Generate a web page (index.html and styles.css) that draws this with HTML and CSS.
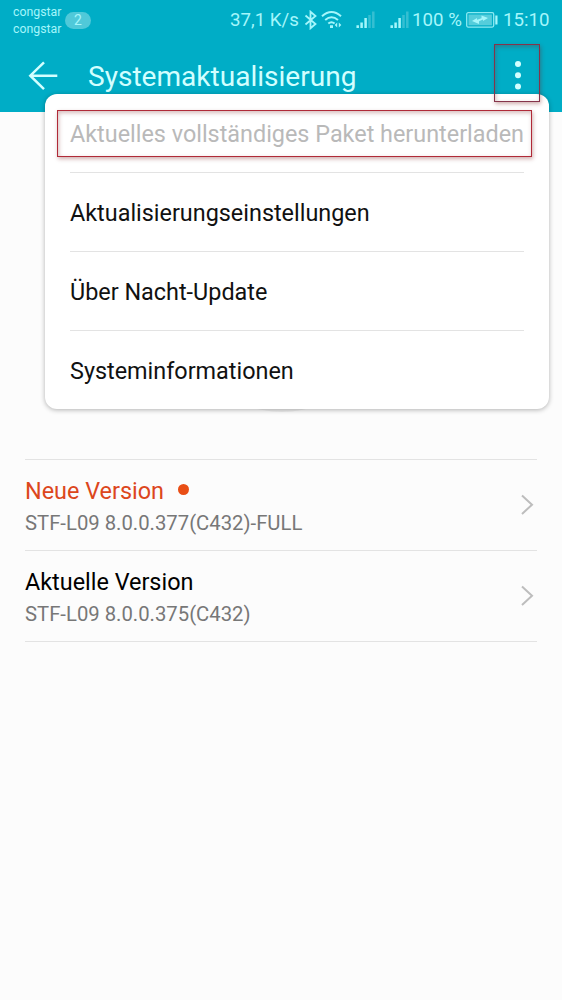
FILE: index.html
```html
<!DOCTYPE html>
<html lang="de">
<head>
<meta charset="utf-8">
<title>Systemaktualisierung</title>
<link rel="stylesheet" href="styles.css">
</head>
<body>
<div class="phone">
  <header class="top">
    <div class="status">
      <div class="carriers"><span>congstar</span><span>congstar</span></div>
      <span class="count">2</span>
      <span class="speed">37,1 K/s</span>
      <svg class="bluetooth" width="14" height="20" viewBox="0 0 14 20"><path d="M1.500 5.500 11.500 14 6.500 18.300V1.700L11.500 6 1.500 14.500"/></svg>
      <svg class="wifi" width="22" height="20" viewBox="0 0 22 20"><path d="M1 6.200Q10.500-2.200 20 6.200M4.200 10Q10.500 4.600 17 10M7.300 13.500Q10.500 10.900 13.600 13.500"/><path class="solid" d="M9 15.300h3v2.600H9zM16.200 12.500v5L13.700 15zM17.800 12.500v5l2.500-2.500z"/></svg>
      <svg class="signal first" width="20" height="18" viewBox="0 0 20 18"><path d="M1.700 17v-2.700M5.600 17v-5.500M9.600 17V7"/><path class="weak" d="M13.500 17V4M17.300 17V.5"/></svg>
      <svg class="signal second" width="20" height="18" viewBox="0 0 20 18"><path d="M1.700 17v-2.700M5.600 17v-5.500M9.600 17V7"/><path class="weak" d="M13.500 17V4M17.300 17V.5"/></svg>
      <span class="percent">100 %</span>
      <svg class="battery" width="33" height="16" viewBox="0 0 33 16"><rect class="shell" x=".7" y=".7" width="27" height="14.400" rx="1.500"/><rect class="fill" x="2.500" y="2.500" width="23.400" height="10.800"/><path class="cap" d="M29.300 3.500h2.200v9h-2.200z"/><path class="bolt" d="M6 9 11 6v1.800l4.500-1.500V3.500L22 6l-5 3V7.500L13 9.200V12z"/></svg>
      <span class="clock">15:10</span>
    </div>
    <div class="bar">
      <svg class="back" width="30" height="30" viewBox="0 0 30 30"><path d="M16 1.300 2.300 14.700l13.700 13.400M2.300 14.700h27"/></svg>
      <h1>Systemaktualisierung</h1>
      <svg class="more" width="8" height="32" viewBox="0 0 8 32"><circle cx="4" cy="4" r="3"/><circle cx="4" cy="15.200" r="3"/><circle cx="4" cy="26.500" r="3"/></svg>
    </div>
  </header>

  <main class="versions">
    <section class="row">
      <div class="info">
        <h2 class="new">Neue Version<i class="dot"></i></h2>
        <p>STF-L09 8.0.0.377(C432)-FULL</p>
      </div>
      <svg class="chevron" width="14" height="22" viewBox="0 0 14 22"><path d="M2 1.500l10 9.200L2 19.900"/></svg>
    </section>
    <section class="row">
      <div class="info">
        <h2>Aktuelle Version</h2>
        <p>STF-L09 8.0.0.375(C432)</p>
      </div>
      <svg class="chevron" width="14" height="22" viewBox="0 0 14 22"><path d="M2 1.500l10 9.200L2 19.900"/></svg>
    </section>
  </main>

  <div class="dial"></div>
  <nav class="menu">
    <div class="item disabled">Aktuelles vollständiges Paket herunterladen</div>
    <div class="item">Aktualisierungseinstellungen</div>
    <div class="item">Über Nacht-Update</div>
    <div class="item">Systeminformationen</div>
  </nav>
  <div class="mark mark-more"></div>
  <div class="mark mark-item"></div>
</div>
</body>
</html>
```
FILE: styles.css
```css
* { box-sizing: border-box; }
body { margin: 0; font-family: Roboto, "Liberation Sans", sans-serif; }
h1, h2, p { margin: 0; font-weight: 400; white-space: nowrap; }
svg { display: block; flex: none; fill: none; }
.phone { position: relative; width: 562px; height: 1000px; overflow: hidden; background: #fcfcfc; }

.top { height: 112px; background: #00adc6; color: #d2ffff; }
.status { display: flex; align-items: center; height: 40px; padding-left: 13px; color: #a5f6fb; font-size: 18.700px; line-height: 40px; white-space: nowrap; }
.status > * { flex: none; }
.carriers { display: flex; flex-direction: column; width: 52px; padding-top: 1px; font-size: 12.300px; line-height: 17px; }
.count { width: 26px; height: 17px; border-radius: 9px; background: #50c9d9; font-size: 14px; line-height: 17px; text-align: center; }
.speed { width: 74px; margin-left: 139px; }
.bluetooth { margin-right: 3px; stroke: #a5f6fb; stroke-width: 1.8; }
.wifi { stroke: #a5f6fb; stroke-width: 2; }
.wifi .solid { fill: #a5f6fb; stroke: none; }
.signal { stroke: #a5f6fb; stroke-width: 2.5; }
.signal .weak { stroke: #35bfd2; }
.first { margin-left: 13px; }
.second { margin-left: 14px; }
.percent { width: 54px; margin-left: 2px; }
.battery { margin-right: 4px; }
.shell { stroke: #8beaf2; stroke-width: 1.3; }
.fill { fill: #55cddb; }
.cap, .bolt { fill: #a5f6fb; }

.bar { display: flex; align-items: center; height: 72px; padding-left: 28px; }
.back { stroke: #d2ffff; stroke-width: 2.5; }
h1 { width: 426px; margin-left: 30px; font-size: 28.050px; line-height: 72px; padding-top: 1px; }
.more { fill: #d2ffff; }

.versions { margin: 347px 25px 0; border-top: 1px solid #e3e3e3; }
.row { display: flex; justify-content: space-between; align-items: center; height: 91px; padding-right: 3px; border-bottom: 1px solid #e3e3e3; }
.info { padding-top: 2px; }
h2 { display: flex; align-items: center; color: #000; font-size: 23.400px; line-height: 34px; }
.new { color: #dc471c; }
.dot { width: 11px; height: 11px; margin: -3px 0 0 14px; border-radius: 50%; background: #e94e15; }
p { color: #777; font-size: 20.300px; line-height: 31px; }
.chevron { stroke: #bdbdbd; stroke-width: 2; }

.dial { position: absolute; left: 182px; top: 212px; width: 200px; height: 200px; border-radius: 50%; background: #eee; }
.menu { position: absolute; left: 45px; top: 94px; width: 504px; height: 315px; padding: 0 25px; border-radius: 12px; background: #fff; box-shadow: 0 1px 5px rgba(0,0,0,.3); }
.item { height: 79px; padding-top: 1px; border-bottom: 1px solid #e3e3e3; color: #111; font-size: 23.400px; line-height: 79px; white-space: nowrap; }
.item:last-child { border-bottom: 0; }
.disabled { color: #b9b9b9; }
.mark { position: absolute; border: 1px solid #b02a38; box-shadow: 1px 2px 4px rgba(120,30,30,.35), inset 1px 2px 4px rgba(120,30,30,.3); }
.mark-more { left: 494px; top: 44px; width: 46px; height: 58px; border-color: #85344b; }
.mark-item { left: 57px; top: 110px; width: 475px; height: 47px; }
```
